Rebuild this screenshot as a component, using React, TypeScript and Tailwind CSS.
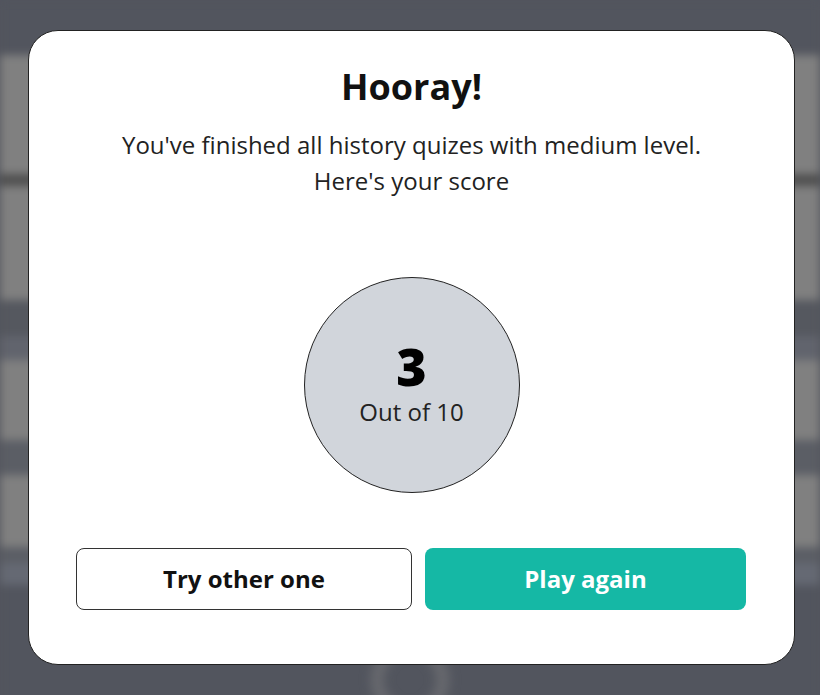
const bands: { h: number; c: string }[] = [
  { h: 55, c: "bg-[#52555e]" },
  { h: 119, c: "bg-[#808080]" },
  { h: 12, c: "bg-[#4f4f4f]" },
  { h: 114, c: "bg-[#808080]" },
  { h: 36, c: "bg-[#55585f]" },
  { h: 24, c: "bg-[#61646d]" },
  { h: 80, c: "bg-[#808080]" },
  { h: 35, c: "bg-[#5b5e65]" },
  { h: 72, c: "bg-[#808080]" },
  { h: 16, c: "bg-[#5b5e65]" },
  { h: 22, c: "bg-[#656973]" },
  { h: 130, c: "bg-[#52555e]" },
];

function BlurredPage() {
  return (
    <div className="absolute inset-0 overflow-hidden bg-[#52555e]">
      <div className="flex flex-col blur-[4px]">
        {bands.map((b, i) => (
          <div key={i} className={b.c} style={{ height: b.h }} />
        ))}
      </div>
      {/* faint ring peeking under the dialog */}
      <div className="absolute left-[372px] top-[642px] w-[76px] h-[76px] rounded-full border-[10px] border-[#6e6f73] blur-[6px]" />
    </div>
  );
}

export default function App() {
  return (
    <div
      className="relative w-[820px] h-[695px] overflow-hidden"
      style={{ fontFamily: '"Open Sans", "Noto Sans", sans-serif' }}
    >
      <BlurredPage />

      <div className="absolute left-[28px] top-[30px] w-[767px] h-[635px] bg-white border border-[#222] rounded-[30px] flex flex-col items-center pt-[33px] px-[47px]">
        <h1 className="text-[36px] leading-[46px] font-bold text-[#111]">Hooray!</h1>
        <p className="mt-[17px] text-[24px] leading-[36px] text-[#222] text-center">
          You've finished all history quizes with medium level.
          <br />
          Here's your score
        </p>

        <div className="mt-[78px] w-[216px] h-[216px] rounded-full bg-[#d1d5db] border border-[#222] flex flex-col items-center justify-center">
          <div className="flex flex-col items-center gap-[7px] -mt-[2px]">
            <span className="text-[52px] leading-[48px] font-extrabold text-black">3</span>
            <span className="text-[24px] leading-[30px] text-[#222]">Out of 10</span>
          </div>
        </div>

        <div className="mt-[55px] w-full flex gap-[13px]">
          <button className="w-[336px] h-[62px] rounded-[8px] border border-[#333] bg-white text-[24px] font-bold text-[#111]">
            Try other one
          </button>
          <button className="w-[321px] h-[62px] rounded-[8px] bg-[#15b8a5] text-[24px] font-bold text-white">
            Play again
          </button>
        </div>
      </div>
    </div>
  );
}
